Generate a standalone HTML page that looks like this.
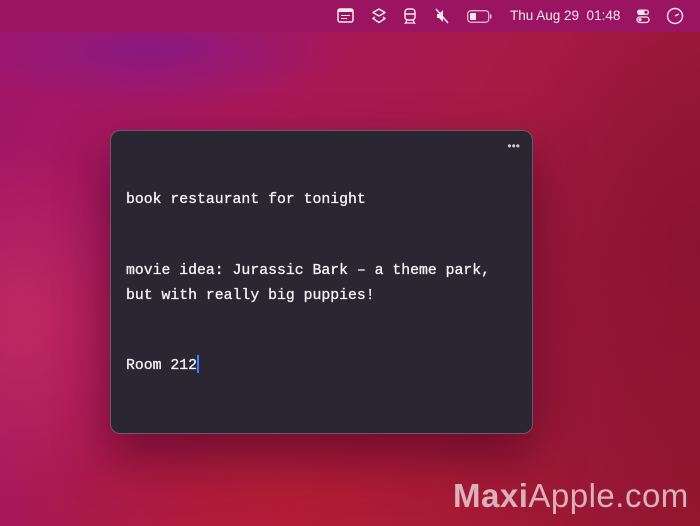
<!DOCTYPE html>
<html><head><meta charset="utf-8"><style>
html,body{margin:0;padding:0;width:700px;height:526px;overflow:hidden}
body{position:relative;font-family:"Liberation Sans",sans-serif;
background:
radial-gradient(ellipse 260px 80px at 150px 50px, rgba(130,25,140,0.75), transparent 75%),
radial-gradient(ellipse 160px 240px at 20px 320px, rgba(205,50,100,0.65), transparent 75%),
radial-gradient(ellipse 300px 400px at 700px 250px, rgba(135,18,45,0.8), transparent 70%),
radial-gradient(ellipse 450px 200px at 300px 500px, rgba(185,30,45,0.7), transparent 70%),
linear-gradient(120deg,#a0166a 0%,#a8185a 30%,#a81a45 55%,#9a1838 80%,#941630 100%);}
.mb{position:absolute;top:0;left:0;width:700px;height:32px;background:#9a1462}
.bar{position:absolute;top:0;left:0;width:700px;height:32px;color:#f4e6ee;font-size:13.5px}
.bar svg{position:absolute;top:8px}
.time{position:absolute;left:510px;top:8px;white-space:pre}
.win{position:absolute;left:110px;top:130px;width:421px;height:302px;background:#2b2732;border-radius:10px;
border:1px solid #6a5a68;box-shadow:0 22px 50px rgba(60,0,30,0.55)}
.txt{position:absolute;left:15px;color:#f4f2f6;font-family:"Liberation Mono",monospace;font-size:14.8px;line-height:25px;white-space:pre;-webkit-text-stroke:0.3px #f4f2f6}
.dots{position:absolute;right:12px;top:8px;color:#ccc;font-size:12px}
.wm{position:absolute;left:453px;top:477px;font-size:33px;color:rgba(235,215,220,0.8);letter-spacing:0.5px}
.cur{display:inline-block;width:2px;height:18px;background:#3a82f7;vertical-align:-4px}
</style></head><body>
<div class="mb"></div>
<div class="bar">
<svg style="left:337px" width="17" height="15" viewBox="0 0 17 15"><rect x="1" y="1" width="15" height="13" rx="2" fill="none" stroke="#f4e6ee" stroke-width="1.5"/><rect x="1" y="1" width="15" height="3" fill="#f4e6ee"/><line x1="4" y1="7.5" x2="13" y2="7.5" stroke="#f4e6ee"/><line x1="4" y1="10.5" x2="10" y2="10.5" stroke="#f4e6ee"/></svg>
<svg style="left:372px" width="14" height="16" viewBox="0 0 14 16"><path d="M7 1 L13 4.5 L7 8 L1 4.5 Z M3 9 L1 10.5 L7 14.5 L13 10.5 L11 9" fill="none" stroke="#f4e6ee" stroke-width="1.5" stroke-linejoin="round"/></svg>
<svg style="left:403px" width="14" height="17" viewBox="0 0 14 17"><rect x="2" y="1" width="10" height="11" rx="3" fill="none" stroke="#f4e6ee" stroke-width="1.5"/><line x1="2" y1="6" x2="12" y2="6" stroke="#f4e6ee" stroke-width="1.5"/><path d="M4 12 L2 16 M10 12 L12 16 M3 15 L11 15" stroke="#f4e6ee" stroke-width="1.3"/></svg>
<svg style="left:435px" width="14" height="16" viewBox="0 0 14 16"><path d="M2 6 H4 L8 2 V14 L4 10 H2 Z" fill="#f4e6ee"/><line x1="1" y1="1" x2="13" y2="15" stroke="#f4e6ee" stroke-width="1.5"/></svg>
<svg style="left:467px;top:10px" width="26" height="13" viewBox="0 0 26 13"><rect x="0.75" y="0.75" width="21" height="11.5" rx="3" fill="none" stroke="#e8c8d4" stroke-width="1.2"/><rect x="3" y="3" width="6" height="7" rx="1" fill="#f4e6ee"/><rect x="23" y="4.5" width="1.5" height="4" fill="#e8c8d4"/></svg>
<div class="time">Thu Aug 29  01:48</div>
<svg style="left:636px" width="14" height="16" viewBox="0 0 14 16"><rect x="1" y="1.5" width="12" height="5.5" rx="2.75" fill="#f4e6ee"/><rect x="1" y="9" width="12" height="5.5" rx="2.75" fill="none" stroke="#f4e6ee" stroke-width="1.3"/><circle cx="10" cy="4.25" r="1.6" fill="#9a1462"/><circle cx="4" cy="11.75" r="1.6" fill="#f4e6ee"/></svg>
<svg style="left:666px;top:7px" width="18" height="18" viewBox="0 0 18 18"><circle cx="9" cy="9" r="7.5" fill="none" stroke="#f4e6ee" stroke-width="1.4"/><path d="M9 9 L13 7" stroke="#f4e6ee" stroke-width="1.4"/></svg>
</div>
<div class="win">
<div class="dots">•••</div>
<div class="txt" style="top:57px">book restaurant for tonight</div>
<div class="txt" style="top:128px">movie idea: Jurassic Bark – a theme park,
but with really big puppies!</div>
<div class="txt" style="top:223px">Room 212<span class="cur"></span></div>
</div>
<div class="wm"><b>Maxi</b>Apple.com</div>
</body></html>
